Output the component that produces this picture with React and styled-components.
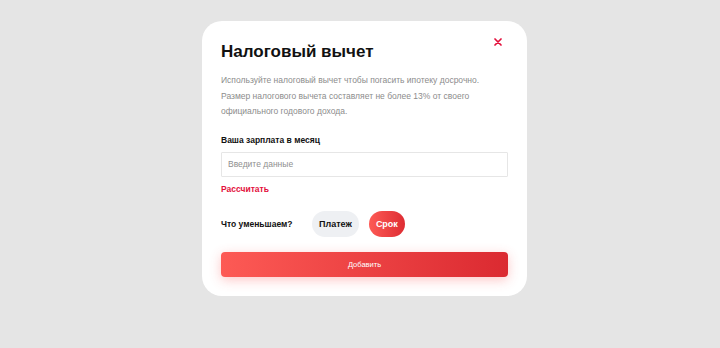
import React, { useState } from 'react'
import styled, { createGlobalStyle } from 'styled-components'

const GlobalStyle = createGlobalStyle`
  html, body {
    margin: 0;
    padding: 0;
    background: #e5e5e5;
    font-family: 'Liberation Sans', Arial, sans-serif;
  }
`

const Page = styled.div`
  width: 720px;
  height: 348px;
  display: flex;
  justify-content: center;
  align-items: flex-start;
  padding: 21px 0 0 9px;
  box-sizing: border-box;
`

const Modal = styled.div`
  position: relative;
  width: 325px;
  box-sizing: border-box;
  padding: 19px 19px 19px 19px;
  background: #fff;
  border-radius: 20px;
  display: flex;
  flex-direction: column;
`

const Close = styled.button`
  position: absolute;
  top: 14px;
  right: 22px;
  width: 14px;
  height: 14px;
  padding: 0;
  border: none;
  background: none;
  cursor: pointer;
  display: flex;
  align-items: center;
  justify-content: center;
`

const Title = styled.h2`
  margin: 0;
  font-size: 17px;
  line-height: 24px;
  font-weight: 700;
  color: #111;
`

const Text = styled.p`
  margin: 9px 0 0;
  font-size: 8.5px;
  line-height: 15.5px;
  color: #8c8c8c;
`

const Label = styled.label`
  margin-top: 12px;
  font-size: 8.5px;
  line-height: 16px;
  font-weight: 700;
  color: #111;
`

const Input = styled.input`
  margin-top: 4px;
  height: 25px;
  box-sizing: border-box;
  border: 1px solid #e6e6e6;
  border-radius: 1px;
  padding: 0 6px;
  font-family: inherit;
  font-size: 8.5px;
  color: #333;
  outline: none;

  &::placeholder {
    color: #8f8f8f;
  }
`

const LinkButton = styled.button`
  align-self: flex-start;
  margin-top: 5px;
  padding: 0;
  border: none;
  background: none;
  font-family: inherit;
  font-size: 8.5px;
  line-height: 14px;
  font-weight: 700;
  color: #e3103c;
  cursor: pointer;
`

const Row = styled.div`
  margin-top: 15px;
  display: flex;
  align-items: center;
`

const RowLabel = styled.span`
  width: 91px;
  font-size: 8.5px;
  font-weight: 700;
  color: #111;
  padding-top: 1px;
`

const Chips = styled.div`
  display: flex;
  gap: 10px;
`

const Chip = styled.button`
  height: 26px;
  padding: 0 7px;
  border: none;
  border-radius: 13px;
  font-family: inherit;
  font-size: 9px;
  font-weight: 700;
  cursor: pointer;
  color: ${p => (p.$active ? '#fff' : '#111')};
  background: ${p => (p.$active ? 'linear-gradient(90deg, #fd5a55 0%, #de2d33 100%)' : '#eef0f3')};
`

const Submit = styled.button`
  margin-top: 15px;
  height: 25px;
  border: none;
  border-radius: 4px;
  background: linear-gradient(90deg, #fd5a55 0%, #db2a31 100%);
  box-shadow: 0 3px 12px rgba(250, 70, 70, 0.3);
  color: #fff;
  font-family: inherit;
  font-size: 7.5px;
  cursor: pointer;
`

export default function App() {
  const [mode, setMode] = useState('term')

  return (
    <>
      <GlobalStyle />
      <Page>
        <Modal>
          <Close aria-label="Закрыть">
            <svg width="8" height="8" viewBox="0 0 8 8">
              <path d="M1 1L7 7M7 1L1 7" stroke="#e3103c" strokeWidth="1.7" strokeLinecap="round" />
            </svg>
          </Close>
          <Title>Налоговый вычет</Title>
          <Text>
            Используйте налоговый вычет чтобы погасить ипотеку досрочно.
            <br />
            Размер налогового вычета составляет не более 13% от своего
            <br />
            официального годового дохода.
          </Text>
          <Label htmlFor="salary">Ваша зарплата в месяц</Label>
          <Input id="salary" placeholder="Введите данные" />
          <LinkButton>Рассчитать</LinkButton>
          <Row>
            <RowLabel>Что уменьшаем?</RowLabel>
            <Chips>
              <Chip $active={mode === 'payment'} onClick={() => setMode('payment')}>Платеж</Chip>
              <Chip $active={mode === 'term'} onClick={() => setMode('term')}>Срок</Chip>
            </Chips>
          </Row>
          <Submit>Добавить</Submit>
        </Modal>
      </Page>
    </>
  )
}
